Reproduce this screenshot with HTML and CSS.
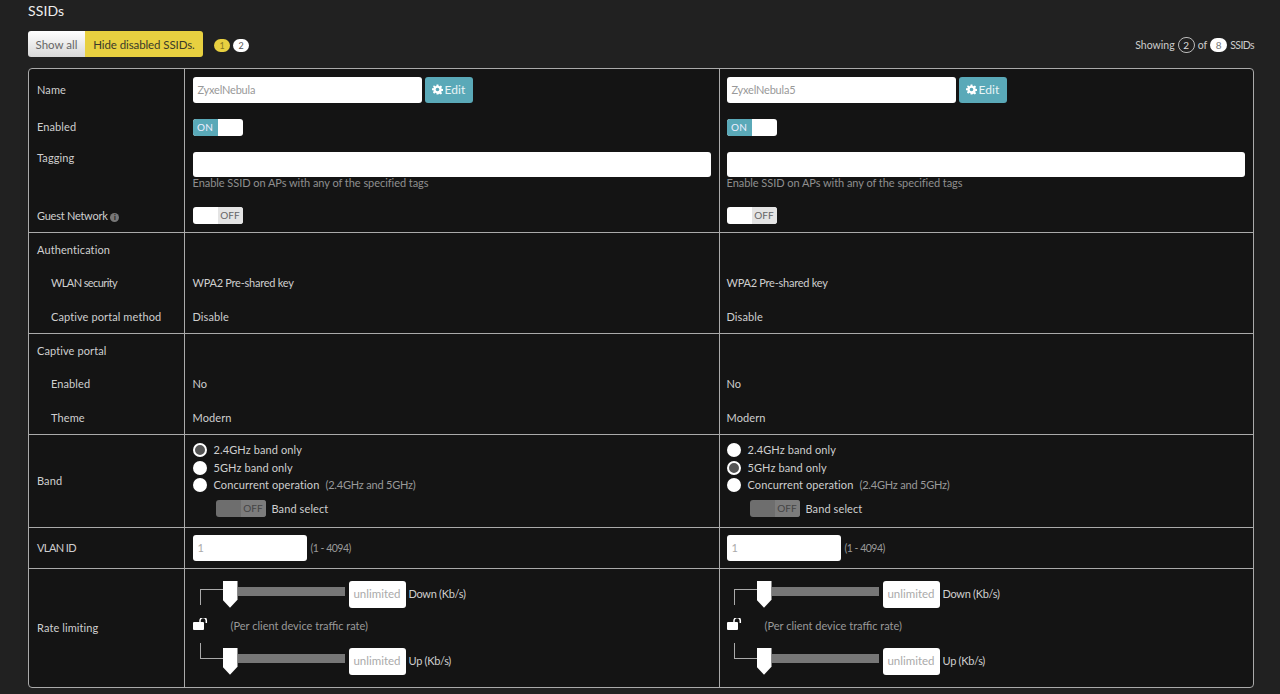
FILE: index.html
```html
<!DOCTYPE html>
<html lang="en">
<head>
<meta charset="utf-8">
<title>SSIDs</title>
<link rel="stylesheet" href="styles.css">
</head>
<body>
<main class="page">
  <h1 class="title">SSIDs</h1>
  <div class="toolbar">
    <div class="seg">
      <span class="seg-a">Show all</span><span class="seg-b">Hide disabled SSIDs.</span>
    </div>
    <div class="pager"><span class="pg pg-on">1</span><span class="pg">2</span></div>
    <div class="showing">Showing <span class="pill-o">2</span> of <span class="pill-w">8</span> <span class="tighter">SSIDs</span></div>
  </div>
  <div class="wrap">
    <table class="grid">
      <colgroup><col class="c0"><col class="c1"><col class="c2"></colgroup>
      <tbody class="sec">
        <tr class="r-name"><th>Name</th>
          <td><div class="name"><div class="field f-name">ZyxelNebula</div><div class="edit"><svg class="gear" viewBox="0 0 24 24"><path fill="#fff" d="M10 1h4l.6 3.2 2 .8L19.3 3l2.8 2.8-2 2.7.8 2 3.1.5v4l-3.1.5-.8 2 2 2.7-2.8 2.8-2.7-2-2 .8L14 23h-4l-.6-3.2-2-.8-2.7 2-2.8-2.8 2-2.7-.8-2L0 13.5v-4l3.1-.5.8-2-2-2.7L4.700 3l2.700 2 2-.8zM12 8a4 4 0 1 0 0 8 4 4 0 0 0 0-8z" fill-rule="evenodd"/></svg>Edit</div></div></td>
          <td><div class="name"><div class="field f-name">ZyxelNebula5</div><div class="edit"><svg class="gear" viewBox="0 0 24 24"><path fill="#fff" d="M10 1h4l.6 3.2 2 .8L19.3 3l2.8 2.8-2 2.7.8 2 3.1.5v4l-3.1.5-.8 2 2 2.7-2.8 2.8-2.7-2-2 .8L14 23h-4l-.6-3.2-2-.8-2.7 2-2.8-2.8 2-2.7-.8-2L0 13.5v-4l3.1-.5.8-2-2-2.7L4.700 3l2.700 2 2-.8zM12 8a4 4 0 1 0 0 8 4 4 0 0 0 0-8z" fill-rule="evenodd"/></svg>Edit</div></div></td></tr>
        <tr class="r-en"><th>Enabled</th>
          <td><div class="tg"><span class="tg-on">ON</span></div></td>
          <td><div class="tg"><span class="tg-on">ON</span></div></td></tr>
        <tr class="r-tag"><th class="top">Tagging</th>
          <td class="top"><div class="field f-tag"></div><div class="hint">Enable SSID on APs with any of the specified tags</div></td>
          <td class="top"><div class="field f-tag"></div><div class="hint">Enable SSID on APs with any of the specified tags</div></td></tr>
        <tr class="r-guest"><th><span class="tight">Guest Network</span> <span class="info">i</span></th>
          <td><div class="tg tg-r"><span class="tg-off">OFF</span></div></td>
          <td><div class="tg tg-r"><span class="tg-off">OFF</span></div></td></tr>
      </tbody>
      <tbody class="sec">
        <tr class="r-a"><th>Authentication</th><td></td><td></td></tr>
        <tr class="r-b"><th class="sub"><span class="tighter">WLAN security</span></th><td><span class="tight">WPA2 Pre-shared key</span></td><td><span class="tight">WPA2 Pre-shared key</span></td></tr>
        <tr class="r-a"><th class="sub">Captive portal method</th><td>Disable</td><td>Disable</td></tr>
      </tbody>
      <tbody class="sec">
        <tr class="r-a"><th>Captive portal</th><td></td><td></td></tr>
        <tr class="r-b"><th class="sub">Enabled</th><td>No</td><td>No</td></tr>
        <tr class="r-a"><th class="sub">Theme</th><td>Modern</td><td>Modern</td></tr>
      </tbody>
      <tbody class="sec">
        <tr class="r-band"><th>Band</th>
          <td class="top-band"><div class="band">
            <div class="opt"><span class="radio radio-on"></span>2.4GHz band only</div>
            <div class="opt"><span class="radio"></span>5GHz band only</div>
            <div class="opt"><span class="radio"></span>Concurrent operation<span class="note">(2.4GHz and 5GHz)</span></div>
            <div class="bs"><div class="tg tg-r tg-dis"><span class="tg-off">OFF</span></div>Band select</div>
          </div></td>
          <td class="top-band"><div class="band">
            <div class="opt"><span class="radio"></span>2.4GHz band only</div>
            <div class="opt"><span class="radio radio-on"></span>5GHz band only</div>
            <div class="opt"><span class="radio"></span>Concurrent operation<span class="note">(2.4GHz and 5GHz)</span></div>
            <div class="bs"><div class="tg tg-r tg-dis"><span class="tg-off">OFF</span></div>Band select</div>
          </div></td></tr>
      </tbody>
      <tbody class="sec">
        <tr class="r-vlan"><th><span class="tighter">VLAN ID</span></th>
          <td><div class="vl"><div class="field f-vlan">1</div><span class="range">(1 - 4094)</span></div></td>
          <td><div class="vl"><div class="field f-vlan">1</div><span class="range">(1 - 4094)</span></div></td></tr>
      </tbody>
      <tbody class="sec">
        <tr class="r-rate"><th>Rate limiting</th>
          <td><div class="rate">
            <div class="sl"><span class="conn conn-d"></span><span class="handle"></span><span class="track"></span><div class="field f-rate">unlimited</div><span class="unit">Down (Kb/s)</span></div>
            <div class="lockrow"><svg class="lock" viewBox="0 0 15 12"><rect x="0" y="4" width="11" height="8" rx="1" fill="#fff"/><path d="M7 4.500V3a3 3 0 0 1 6.300-.6V5" fill="none" stroke="#fff" stroke-width="1.500"/></svg><span class="per">(Per client device traffic rate)</span></div>
            <div class="sl"><span class="conn conn-u"></span><span class="handle"></span><span class="track"></span><div class="field f-rate">unlimited</div><span class="unit">Up (Kb/s)</span></div>
          </div></td>
          <td><div class="rate">
            <div class="sl"><span class="conn conn-d"></span><span class="handle"></span><span class="track"></span><div class="field f-rate">unlimited</div><span class="unit">Down (Kb/s)</span></div>
            <div class="lockrow"><svg class="lock" viewBox="0 0 15 12"><rect x="0" y="4" width="11" height="8" rx="1" fill="#fff"/><path d="M7 4.500V3a3 3 0 0 1 6.300-.6V5" fill="none" stroke="#fff" stroke-width="1.500"/></svg><span class="per">(Per client device traffic rate)</span></div>
            <div class="sl"><span class="conn conn-u"></span><span class="handle"></span><span class="track"></span><div class="field f-rate">unlimited</div><span class="unit">Up (Kb/s)</span></div>
          </div></td></tr>
      </tbody>
    </table>
  </div>
</main>
</body>
</html>
```
FILE: styles.css
```css
* { box-sizing: border-box; }
html, body { margin: 0; height: 100%; }
body {
  background: #212121;
  color: #d2d2d2;
  font: 11px/14px Lato, "Liberation Sans", sans-serif;
  letter-spacing: .1px;
  overflow: hidden;
}
.page { padding: 0 26px 0 28px; }
.title {
  margin: 0;
  height: 31px;
  padding-top: 3px;
  font-size: 14px;
  line-height: 16px;
  font-weight: 400;
  color: #eee;
}
.toolbar { display: flex; align-items: center; height: 26px; margin-bottom: 11px; }
.seg { display: flex; height: 26px; border-radius: 3px; overflow: hidden; font-size: 11.5px; letter-spacing: 0; }
.seg-a {
  width: 57px; line-height: 27px; text-align: center;
  background: linear-gradient(#fff, #d8d8d8); color: #666;
}
.seg-b { width: 118px; line-height: 27px; text-align: center; background: #e8d040; color: #3a3a2a; letter-spacing: -.1px; }
.pager { display: flex; gap: 3px; margin-left: 11px; margin-top: 2px; }
.pg {
  width: 16px; height: 13px; border-radius: 7px; background: #fff; color: #555;
  font-size: 9px; line-height: 13px; text-align: center; letter-spacing: 0;
}
.pg-on { background: #e8d040; color: #8a7a20; }
.showing { margin-left: auto; margin-top: 1px; color: #ccc; display: flex; align-items: center; gap: 3px; font-size: 10.500px; letter-spacing: 0; }
.pill-o, .pill-w {
  width: 17px; border-radius: 8px; text-align: center;
  font-size: 10px; letter-spacing: 0;
}
.pill-o { height: 16px; line-height: 14px; border: 1px solid #bbb; color: #ddd; }
.pill-w { height: 14px; background: #fff; color: #777; line-height: 14px; }
.wrap {
  height: 620px;
  border: 1px solid #aaa;
  border-radius: 4px;
  background: #141414;
  overflow: hidden;
}
.grid { width: 100%; height: 100%; table-layout: fixed; border-collapse: collapse; }
.c0 { width: 155px; }
.c1 { width: 535px; }
.grid th, .grid td {
  padding: 0 8px;
  font-weight: 400;
  text-align: left;
  vertical-align: middle;
}
.grid th { color: #cfcfcf; }
.grid td { border-left: 1px solid #aaa; color: #cfcfcf; }
.grid td:last-child { padding-left: 7px; }
.grid th.top, .grid td.top { vertical-align: top; }
.grid th.top { padding-top: 7px; }
.grid td.top { padding-top: 8px; }
.grid td.top-band { vertical-align: top; padding-top: 7px; }
.grid th.sub { padding-left: 22px; }
.sec + .sec tr:first-child th, .sec + .sec tr:first-child td { border-top: 1px solid #aaa; }
.tight { letter-spacing: -.25px; }
.tighter { letter-spacing: -.6px; }
.r-name { height: 41px; }
.r-en { height: 34px; }
.r-tag { height: 55px; }
.r-guest { height: 33px; }
.r-guest th, .r-a th, .r-a td { padding-top: 2px; }
.r-a { height: 34px; }
.r-b { height: 33px; }
.r-band { height: 93px; }
.r-vlan { height: 41px; }
.r-rate { height: 119px; }
.field {
  background: #fff; border-radius: 3px; color: #999; height: 26px; line-height: 26px; padding: 0 5px; letter-spacing: -.2px;
}
.name { display: flex; gap: 3px; }
.f-name { width: 229px; }
.edit {
  width: 48px; height: 26px; border-radius: 3px; background: #5aa9b8; color: #e8f4f6;
  display: flex; align-items: center; justify-content: center; gap: 2px; font-size: 12px;
}
.gear { width: 11px; height: 11px; }
.f-tag { height: 25px; }
.hint { color: #8f8f8f; margin-top: -1px; line-height: 13px; letter-spacing: -.05px; }
.tg {
  width: 50px; height: 17px; border-radius: 3px; background: #fff; overflow: hidden; display: flex;
  font-size: 10px; line-height: 17px;
}
.tg-on { width: 25px; background: #5aa9b8; color: #eef; text-align: center; }
.tg-r { justify-content: flex-end; }
.tg-off { width: 25px; background: #e4e4e4; color: #666; text-align: center; }
.tg-dis { background: #6e6e6e; }
.tg-dis .tg-off { background: #7c7c7c; color: #444; }
.info {
  display: inline-block; width: 9px; height: 9px; border-radius: 50%; background: #777; color: #141414;
  font-size: 7px; line-height: 9px; text-align: center; font-weight: 700; letter-spacing: 0;
}
.band { display: flex; flex-direction: column; }
.opt { display: flex; align-items: center; height: 17.500px; }
.radio {
  width: 14px; height: 14px; border-radius: 50%; background: #fff; margin-right: 7px;
}
.radio-on { background: #555; border: 2px solid #fff; }
.note { color: #999; margin-left: 6px; letter-spacing: -.2px; }
.bs { display: flex; align-items: center; gap: 6px; margin: 6px 0 0 23px; }
.vl { display: flex; align-items: center; gap: 4px; }
.f-vlan { width: 114px; color: #aaa; }
.range { color: #999; letter-spacing: -.5px; font-size: 10.500px; }
.rate { display: flex; flex-direction: column; }
.sl { display: flex; align-items: flex-start; position: relative; height: 27px; padding-left: 30px; }
.conn { position: absolute; left: 7px; width: 23px; border-left: 1px solid #aaa; }
.conn-d { top: 8px; height: 16px; border-top: 1px solid #aaa; }
.conn-u { top: -5px; height: 16px; border-bottom: 1px solid #aaa; }
.handle {
  width: 15px; height: 27px; background: #fff;
  clip-path: polygon(0 0, 100% 0, 100% 70%, 50% 100%, 0 70%);
}
.track { width: 107px; height: 9px; margin-top: 6px; background: #777; }
.f-rate { width: 57px; height: 27px; line-height: 26px; margin-left: 4px; padding: 0; text-align: center; font-size: 11.500px; color: #aaa; letter-spacing: 0; }
.unit { margin-left: 3px; line-height: 26px; letter-spacing: -.3px; }
.lockrow { height: 40px; padding-bottom: 7px; display: flex; align-items: center; color: #999; }
.lock { width: 15px; height: 12px; margin-right: 23px; }
.per { letter-spacing: 0; margin-top: 3px; }
```
